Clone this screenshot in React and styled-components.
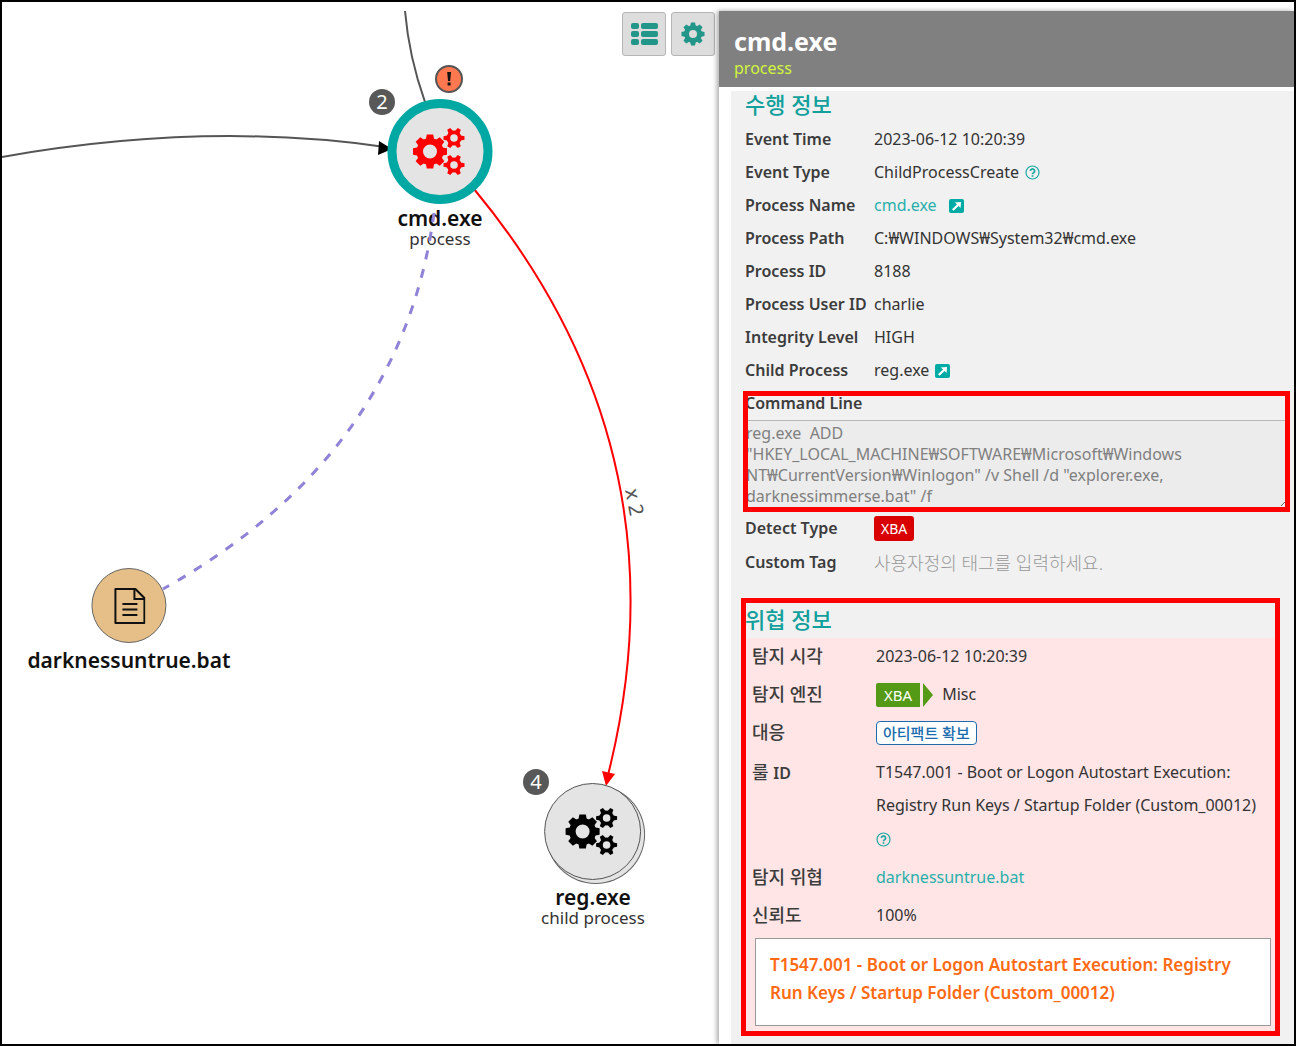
import React from 'react';
import styled, { createGlobalStyle } from 'styled-components';

const GlobalStyle = createGlobalStyle`
    *, *::before, *::after {
        box-sizing: border-box;
    }
    body {
        margin: 0;
        background-color: #ffffff;
        font-family: 'Noto Sans', 'Open Sans', 'Noto Sans CJK KR', sans-serif;
        font-size: 16px;
        color: #333333;
    }
    h1, h2, p, dl, dd {
        margin: 0;
    }
    a {
        text-decoration: none;
    }
`;

const Frame = styled.main`
    min-height: 100vh;
    display: grid;
    grid-template-columns: minmax(0, 717fr) minmax(0, 575fr);
    border: 2px solid #000000;
`;

/* graph canvas */

const Graph = styled.section`
    position: relative;
    overflow: hidden;
`;

const Links = styled.svg`
    position: absolute;
    top: 0;
    left: 0;
    width: 100%;
    height: 100%;
    pointer-events: none;
`;

const Toolbar = styled.div`
    display: flex;
    justify-content: flex-end;
    gap: 5px;
    padding: 10px 4px 0 0;
`;

const ToolButton = styled.button`
    width: 44px;
    height: 44px;
    display: flex;
    align-items: center;
    justify-content: center;
    padding: 0;
    color: #23968a;
    background-color: #dddddd;
    border: 1px solid #b5b5b5;
    border-radius: 3px;
`;

const Node = styled.div`
    position: absolute;
    left: ${props => props.$x}px;
    top: ${props => props.$y}px;
    transform: translateX(-50%);
    display: flex;
    flex-direction: column;
    align-items: center;
    gap: ${props => props.$gap}px;
    white-space: nowrap;
    color: #111111;
`;

const NodeCircle = styled.div`
    width: ${props => props.$size}px;
    height: ${props => props.$size}px;
    display: flex;
    align-items: center;
    justify-content: center;
    border-radius: 50%;
    border: ${props => props.$border};
    background-color: ${props => props.$fill};
    box-shadow: ${props => props.$stacked ? '3px 3px 0 0 #e4e4e4, 3px 3px 0 1px #666666' : 'none'};
    color: ${props => props.$color};
`;

const NodeLabel = styled.div`
    display: flex;
    flex-direction: column;
    align-items: center;
`;

const NodeName = styled.strong`
    font-size: 21px;
    line-height: 22px;
    font-weight: 600;
`;

const NodeKind = styled.span`
    font-size: 17px;
    line-height: 20px;
    color: #333333;
`;

const Count = styled.span`
    position: absolute;
    left: ${props => props.$x}px;
    top: ${props => props.$y}px;
    width: 26px;
    height: 26px;
    border-radius: 50%;
    background-color: #585858;
    color: #ffffff;
    font-size: 20px;
    line-height: 26px;
    text-align: center;
`;

const AlertIcon = styled.svg`
    position: absolute;
    left: 433px;
    top: 63px;
`;

/* detail panel */

const Panel = styled.aside`
    margin-top: 9px;
    display: flex;
    flex-direction: column;
    background-color: #ffffff;
    box-shadow: -2px 0 5px rgba(0, 0, 0, 0.35);
    z-index: 2;
`;

const PanelHeader = styled.header`
    padding: 13px 15px 9px;
    background-color: #808080;
`;

const PanelTitle = styled.h1`
    font-size: 25px;
    line-height: 34px;
    font-weight: 700;
    color: #ffffff;
`;

const PanelKind = styled.p`
    font-size: 16px;
    line-height: 20px;
    color: #d2f53c;
`;

const PanelBody = styled.div`
    flex: 1;
    margin: 4px 0 0 12px;
    padding: 0 5px 7px 14px;
    background-color: #f1f1f1;
`;

const SectionTitle = styled.h2`
    margin-bottom: 6px;
    font-size: 22px;
    line-height: 26px;
    font-weight: 500;
    color: #11a09c;
`;

const Row = styled.div`
    display: grid;
    grid-template-columns: 129px minmax(0, 1fr);
    align-items: center;
`;

const Label = styled.dt`
    font-size: 16px;
    line-height: 33px;
    font-weight: 600;
    white-space: nowrap;
    color: #3c3c3c;
`;

const Value = styled.dd`
    min-height: 33px;
    display: flex;
    align-items: center;
    gap: 6px;
    font-size: 16px;
    line-height: 33px;
`;

const TagFields = styled.dl`
    display: grid;
    gap: 1px;
    padding-top: 5px;
`;

const Link = styled.a`
    margin-right: 6px;
    color: #27b0ab;
`;

const Hint = styled.button`
    display: inline-flex;
    vertical-align: middle;
    padding: 0;
    border: 0;
    background: none;
    color: #1aa8a4;
`;

const Highlight = styled.div`
    position: relative;
    margin-top: ${props => props.$top || 0}px;

    &::after {
        content: '';
        position: absolute;
        inset: ${props => props.$inset};
        border: 5px solid #ff0000;
        pointer-events: none;
    }
`;

const CommandLabel = styled.label`
    display: block;
    font-size: 16px;
    line-height: 33px;
    font-weight: 600;
    color: #3c3c3c;
`;

const CommandText = styled.textarea`
    display: block;
    width: 100%;
    height: 87px;
    padding: 2px 1px 0;
    border: 0;
    border-top: 1px solid #b8b8b8;
    background-color: #ececec;
    font-family: inherit;
    font-size: 16px;
    line-height: 21px;
    color: #808080;
    resize: both;
    overflow: hidden;
`;

const TypeBadge = styled.span`
    padding: 0 7px;
    border-radius: 3px;
    background-color: #d90000;
    color: #ffffff;
    font-size: 14px;
    line-height: 25px;
`;

const TagInput = styled.input`
    width: 100%;
    padding: 0;
    border: 0;
    background: none;
    font-family: inherit;
    font-size: 18px;

    &::placeholder {
        color: #999999;
        font-weight: 300;
        opacity: 1;
    }
`;

const Threat = styled.div`
    margin-right: 10px;
    padding-bottom: 5px;
    background-color: #ffe5e5;
`;

const ThreatRow = styled(Row)`
    grid-template-columns: 124px minmax(0, 1fr);
    align-items: start;
    padding: ${props => props.$tall ? '4px 16px 4px 7px' : '2px 16px 3px 7px'};
`;

const KoLabel = styled(Label)`
    font-size: 18px;
    font-weight: 500;
`;

const Latin = styled.span`
    font-size: 16px;
    font-weight: 600;
`;

const EngineBadge = styled.span`
    display: flex;
    gap: 3px;
    margin-right: 3px;
    color: #ffffff;
    font-size: 15px;
    line-height: 24px;

    & > span {
        padding: 0 8px;
        border-radius: 2px 0 0 2px;
        background-color: #549a16;
    }

    &::after {
        content: '';
        border-top: 12px solid transparent;
        border-bottom: 12px solid transparent;
        border-left: 10px solid #549a16;
    }
`;

const ActionButton = styled.button`
    height: 24px;
    padding: 0 6px;
    border: 1px solid #1a6cae;
    border-radius: 4px;
    background-color: #ffffff;
    font-family: inherit;
    font-size: 15px;
    line-height: 20px;
    font-weight: 500;
    color: #1a6cae;
`;

const RuleBox = styled.p`
    min-height: 88px;
    margin: 3px 8px 0 10px;
    padding: 12px 32px 12px 14px;
    border: 1px solid #999999;
    background-color: #ffffff;
    font-size: 17px;
    line-height: 28px;
    font-weight: 600;
    color: #ff6a13;
`;

const Gear = ({ cx, cy, teeth, outer, body, hole, tooth }) => (
    <g transform={`translate(${cx} ${cy})`}>
        <circle r={(body + hole) / 2} fill="none" stroke="currentColor" strokeWidth={body - hole} />
        {Array.from({ length: teeth }, (_, i) => (
            <path
                key={i}
                d={`M${body - 2} ${-tooth / 2 - 1} L${outer} ${-tooth / 2} V${tooth / 2} L${body - 2} ${tooth / 2 + 1} Z`}
                fill="currentColor"
                transform={`rotate(${i * 360 / teeth})`}
            />
        ))}
    </g>
);

const CogsIcon = () => (
    <svg width="56" height="48" viewBox="0 0 56 48">
        <Gear cx={17.5} cy={23.5} teeth={8} outer={17} body={13.5} hole={7} tooth={6.5} />
        <Gear cx={41.5} cy={10} teeth={6} outer={10.5} body={7.5} hole={3.8} tooth={3.5} />
        <Gear cx={41.5} cy={37} teeth={6} outer={10.5} body={7.5} hole={3.8} tooth={3.5} />
    </svg>
);

const CogIcon = () => (
    <svg width="24" height="24" viewBox="0 0 24 24">
        <Gear cx={12} cy={12} teeth={8} outer={11.5} body={9} hole={4} tooth={4} />
    </svg>
);

const ListIcon = () => (
    <svg width="27" height="22" viewBox="0 0 27 22" fill="currentColor">
        {[0, 8, 16].map(y => (
            <React.Fragment key={y}>
                <rect x="0" y={y} width="8" height="6" rx="2" />
                <rect x="10" y={y} width="17" height="6" rx="2" />
            </React.Fragment>
        ))}
    </svg>
);

const HelpIcon = () => (
    <svg width="15" height="15" viewBox="0 0 15 15" fill="none" stroke="currentColor">
        <circle cx="7.5" cy="7.5" r="6.5" strokeWidth="1.2" />
        <path d="M5.4 6 a2.1 2 0 1 1 3.2 1.7 q-1.1 .6 -1.1 1.5" strokeWidth="1.7" />
        <path d="M7.5 10.2 v1.6" strokeWidth="1.7" />
    </svg>
);

const OpenIcon = () => (
    <svg width="15" height="14" viewBox="0 0 15 14">
        <rect width="15" height="14" rx="2" fill="#00aaa5" />
        <path d="M3 10.2 L8 5.6 L5.8 3.4 L12 3 L11.6 9 L9.6 7 L4.6 11.8 Z" fill="#ffffff" />
    </svg>
);

const FileIcon = () => (
    <svg width="32" height="36" viewBox="0 0 32 36" fill="none" stroke="#111111" strokeWidth="2">
        <path d="M2 1 H22 L31 10 V35 H2 Z" strokeLinejoin="round" />
        <path d="M21 1 V11 H31" />
        <path d="M9 16 H24 M9 21.500 H24 M9 27 H24" />
    </svg>
);

const GraphCanvas = () => (
    <Graph>
        <Links aria-hidden="true">
            <g transform="translate(-2 -2)" fill="none">
                <path d="M2 157 Q205 121 385 147" stroke="#555555" strokeWidth="2" />
                <path d="M379 141 L392 149 L378 155 Z" fill="#000000" />
                <path d="M405 11 Q409 57 425 102" stroke="#555555" strokeWidth="2" />
                <path d="M474 189 Q690 450 608 775" stroke="#ff0000" strokeWidth="2" />
                <path d="M602 771 L615 774 L606 786 Z" fill="#ff0000" />
            </g>
            <text transform="translate(623 488) rotate(79)" fontSize="20" fill="#555555">x 2</text>
        </Links>

        <Toolbar>
            <ToolButton aria-label="List"><ListIcon /></ToolButton>
            <ToolButton aria-label="Settings"><CogIcon /></ToolButton>
        </Toolbar>

        <Node $x={438} $y={97} $gap={3}>
            <NodeCircle $size={105} $border="9px solid #00a8a3" $fill="#e4e4e4" $color="#ff0000">
                <CogsIcon />
            </NodeCircle>
            <NodeLabel>
                <NodeName>cmd.exe</NodeName>
                <NodeKind>process</NodeKind>
            </NodeLabel>
        </Node>
        <Count $x={367} $y={87}>2</Count>
        <AlertIcon width="28" height="28" viewBox="0 0 28 28">
            <circle cx="14" cy="14" r="13" fill="#ff7850" stroke="#555555" strokeWidth="2" />
            <path d="M12.200 7 H16 L15.200 16 H13 Z M12.600 17.500 H15.600 V20.500 H12.600 Z" fill="#111111" />
        </AlertIcon>

        <Node $x={127} $y={566} $gap={6}>
            <NodeCircle $size={75} $border="1px solid #666666" $fill="#e5bf87">
                <FileIcon />
            </NodeCircle>
            <NodeName>darknessuntrue.bat</NodeName>
        </Node>

        <Node $x={591} $y={781} $gap={6}>
            <NodeCircle $size={97} $border="1px solid #555555" $fill="#e4e4e4" $color="#000000" $stacked>
                <CogsIcon />
            </NodeCircle>
            <NodeLabel>
                <NodeName>reg.exe</NodeName>
                <NodeKind>child process</NodeKind>
            </NodeLabel>
        </Node>
        <Count $x={521} $y={767}>4</Count>

        <Links aria-hidden="true">
            <path
                d="M434 213 Q402 455 163 589"
                transform="translate(-2 -2)"
                fill="none"
                stroke="#8f83d8"
                strokeWidth="3"
                strokeDasharray="9 10"
            />
        </Links>
    </Graph>
);

const Field = ({ label, children }) => (
    <Row>
        <Label>{label}</Label>
        <Value>{children}</Value>
    </Row>
);

const ThreatField = ({ label, tall, children }) => (
    <ThreatRow $tall={tall}>
        <KoLabel>{label}</KoLabel>
        <Value>{children}</Value>
    </ThreatRow>
);

const HelpHint = () => <Hint aria-label="Help"><HelpIcon /></Hint>;

const DetailPanel = () => (
    <Panel>
        <PanelHeader>
            <PanelTitle>cmd.exe</PanelTitle>
            <PanelKind>process</PanelKind>
        </PanelHeader>
        <PanelBody>
            <SectionTitle>수행 정보</SectionTitle>
            <dl>
                <Field label="Event Time">2023-06-12 10:20:39</Field>
                <Field label="Event Type">ChildProcessCreate <HelpHint /></Field>
                <Field label="Process Name"><Link href="#cmd">cmd.exe</Link> <OpenIcon /></Field>
                <Field label="Process Path">C:₩WINDOWS₩System32₩cmd.exe</Field>
                <Field label="Process ID">8188</Field>
                <Field label="Process User ID">charlie</Field>
                <Field label="Integrity Level">HIGH</Field>
                <Field label="Child Process">reg.exe <OpenIcon /></Field>
            </dl>
            <Highlight $inset="4px -1px -5px -2px">
                <CommandLabel htmlFor="command-line">Command Line</CommandLabel>
                <CommandText
                    id="command-line"
                    readOnly
                    value={'reg.exe  ADD\n"HKEY_LOCAL_MACHINE₩SOFTWARE₩Microsoft₩Windows NT₩CurrentVersion₩Winlogon" /v Shell /d "explorer.exe, darknessimmerse.bat" /f'}
                />
            </Highlight>
            <TagFields>
                <Field label="Detect Type"><TypeBadge>XBA</TypeBadge></Field>
                <Field label={<label htmlFor="custom-tag">Custom Tag</label>}>
                    <TagInput id="custom-tag" placeholder="사용자정의 태그를 입력하세요." />
                </Field>
            </TagFields>
            <Highlight $top={27} $inset="-8px 9px -5px -4px">
                <SectionTitle>위협 정보</SectionTitle>
                <Threat>
                    <dl>
                        <ThreatField label="탐지 시각">2023-06-12 10:20:39</ThreatField>
                        <ThreatField label="탐지 엔진">
                            <EngineBadge><span>XBA</span></EngineBadge>Misc
                        </ThreatField>
                        <ThreatField label="대응">
                            <ActionButton>아티팩트 확보</ActionButton>
                        </ThreatField>
                        <ThreatField tall label={<>룰 <Latin>ID</Latin></>}>
                            <span>
                                T1547.001 - Boot or Logon Autostart Execution: Registry Run Keys / Startup Folder (Custom_00012) <HelpHint />
                            </span>
                        </ThreatField>
                        <ThreatField label="탐지 위협"><Link href="#darknessuntrue">darknessuntrue.bat</Link></ThreatField>
                        <ThreatField label="신뢰도">100%</ThreatField>
                    </dl>
                    <RuleBox>
                        T1547.001 - Boot or Logon Autostart Execution: Registry Run Keys / Startup Folder (Custom_00012)
                    </RuleBox>
                </Threat>
            </Highlight>
        </PanelBody>
    </Panel>
);

const App = () => (
    <>
        <GlobalStyle />
        <Frame>
            <GraphCanvas />
            <DetailPanel />
        </Frame>
    </>
);

export default App;
